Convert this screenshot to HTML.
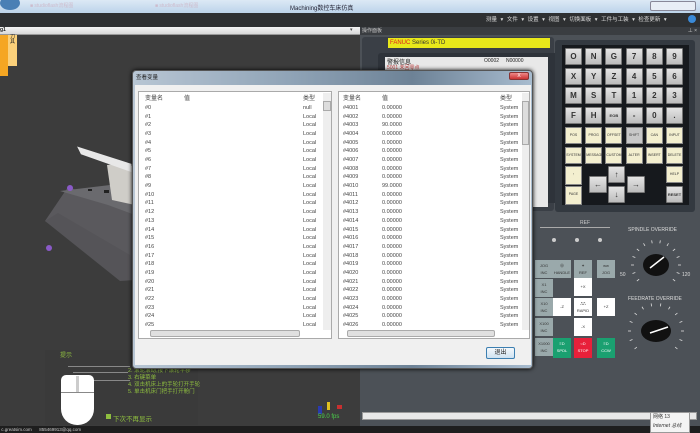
<!DOCTYPE html>
<html><head><meta charset="utf-8">
<style>
*{margin:0;padding:0;box-sizing:border-box}
body{width:700px;height:433px;overflow:hidden;position:relative;background:#3c3c3c;font-family:"Liberation Sans","Noto Sans CJK SC",sans-serif;font-size:6px;color:#222}
.a{position:absolute}
.row{position:absolute;left:0;right:0;height:8.68px;line-height:8.68px;font-size:5.5px;color:#444}
.row span{position:absolute}
.key{position:absolute;width:17px;height:17px;background:linear-gradient(#e4e4e4,#bcbcbc);border:1px solid #777;border-radius:1px;font-size:8px;font-weight:bold;color:#333;text-align:center;line-height:15px}
.fk{position:absolute;width:17px;height:17px;background:#f3efcf;border:1px solid #888;font-size:3.5px;color:#333;text-align:center;line-height:15px}
.mb{position:absolute;width:18px;height:18px;font-size:4px;text-align:center;color:#333;line-height:7px;padding-top:2px}
</style></head><body>
<div class="a" style="left:0;top:0;width:700px;height:13px;background:linear-gradient(#dce9f5,#bcd3ea)"></div>
<div class="a" style="left:0;top:-4px;width:20px;height:14px;border-radius:50%;background:#4a7fb5"></div>
<div class="a" style="left:30px;top:2px;width:100px;height:8px;color:#c9a;opacity:.5;font-size:5px">■ studioflash流程图</div>
<div class="a" style="left:155px;top:2px;width:100px;height:8px;color:#c9a;opacity:.5;font-size:5px">■ studioflash流程图</div>
<div class="a" style="left:290px;top:3px;font-size:6px;color:#223">Machining数控车床仿真</div>
<div class="a" style="left:650px;top:1px;width:46px;height:10px;border:1px solid #889;background:#e8eef6;border-radius:2px"></div>
<div class="a" style="left:0;top:13px;width:700px;height:14px;background:#2e3032"></div>
<div class="a" style="left:486px;top:15px;font-size:5.5px;color:#ddd;word-spacing:2px">测量 ▾ 文件 ▾ 设置 ▾ 视图 ▾ 切换面板 ▾ 工件与工装 ▾ 检查更新 ▾</div>
<div class="a" style="left:688px;top:15px;width:8px;height:8px;border-radius:50%;background:#3a8ad8"></div>
<div class="a" style="left:0;top:27px;width:360px;height:8px;background:linear-gradient(#f4f4f4,#d8d8d8);border-bottom:1px solid #999"></div>
<div class="a" style="left:0;top:27px;font-size:5px;font-weight:bold">g1</div>
<div class="a" style="left:350px;top:27px;font-size:5px;color:#444">▾</div>
<div class="a" style="left:0;top:35px;width:8px;height:41px;background:#f5a623"></div>
<div class="a" style="left:8px;top:35px;width:9px;height:31px;background:#fbd07a;font-size:5px;line-height:5px;text-align:center">刀具</div>
<svg class="a" style="left:0;top:35px" width="360" height="380">
<polygon points="45,186 68,152 108,166 135,178 135,245" fill="#5a595d"/>
<polygon points="60,156 108,170 135,180 135,160 110,150" fill="#6a6a6e"/>
<polygon points="45,186 58,178 130,220 135,245 120,246" fill="#555458"/>
<polygon points="107,130 125,128 135,132 135,170 112,165" fill="#cfcdc8"/>
<polygon points="80,114 82,118 130,135 130,130" fill="#e8e8e8" stroke="#e8e8e8" stroke-width="3"/>
<circle cx="70" cy="153" r="3" fill="#8a5ac8"/><circle cx="49" cy="213" r="3" fill="#8a5ac8"/>
<rect x="88" y="154" width="4" height="2" fill="#222"/><rect x="104" y="155" width="5" height="3" fill="#222"/>
</svg>
<div class="a" style="left:45px;top:350px;width:153px;height:75px;background:#3a3a3a"></div>
<div class="a" style="left:60px;top:350px;font-size:6px;color:#8fbf3f">提示</div>
<div class="a" style="left:128px;top:368px;font-size:5.5px;line-height:7px;color:#8fbf3f">2. 滚轮滚动,按下滚轮平移<br>3. 右键菜单<br>4. 双击机床上的手轮打开手轮<br>5. 单击机床门把手打开舱门</div>
<div class="a" style="left:68px;top:366px;width:62px;height:1px;background:#888"></div>
<div class="a" style="left:73px;top:372px;width:55px;height:1px;background:#888"></div>
<div class="a" style="left:85px;top:380px;width:45px;height:1px;background:#888"></div>
<div class="a" style="left:61px;top:375px;width:33px;height:50px;background:#fff;border-radius:5px 5px 16px 16px"></div>
<div class="a" style="left:61px;top:392px;width:33px;height:1px;background:#888"></div>
<div class="a" style="left:76px;top:376px;width:3px;height:16px;background:#ccc"></div>
<div class="a" style="left:106px;top:414px;width:5px;height:5px;background:#8fbf3f"></div>
<div class="a" style="left:113px;top:413px;font-size:6.5px;color:#8fbf3f">下次不再显示</div>
<div class="a" style="left:318px;top:406px;width:4px;height:8px;background:#2a3ab0"></div>
<div class="a" style="left:327px;top:402px;width:3px;height:8px;background:#e0c020"></div>
<div class="a" style="left:337px;top:405px;width:5px;height:4px;background:#c83030"></div>
<div class="a" style="left:318px;top:414px;font-size:6px;color:#4ad04a">59.0 fps</div>
<div class="a" style="left:0;top:426px;width:700px;height:7px;background:#1e1e1e;color:#ccc;font-size:4.5px;line-height:7px">&nbsp;c.greatsim.com &nbsp;&nbsp;&nbsp;&nbsp;&nbsp;855469913@qq.com</div>
<div class="a" style="left:360px;top:27px;width:340px;height:399px;background:#4c5157"></div>
<div class="a" style="left:360px;top:27px;width:340px;height:8px;background:#3a3d41;font-size:5px;line-height:8px;padding-left:2px;color:#ccc">操作面板<span style="position:absolute;right:3px">⊥ ×</span></div>
<div class="a" style="left:362px;top:37px;width:192px;height:174px;background:#3a3f46;border-radius:3px"></div>
<div class="a" style="left:388px;top:38px;width:162px;height:10px;background:#e8e81a;font-size:6px;line-height:10px;padding-left:2px;color:#333"><span style="color:#e02020">FANUC</span> Series 0i-TD</div>
<div class="a" style="left:378px;top:53px;width:180px;height:150px;background:#2e333a;border-radius:3px"></div>
<div class="a" style="left:385px;top:57px;width:163px;height:150px;background:#e8e8e8"></div>
<div class="a" style="left:387px;top:57px;font-size:6px;color:#222">警报信息</div>
<div class="a" style="left:484px;top:58px;font-size:5px;color:#222">O0002 &nbsp;&nbsp;&nbsp;&nbsp;N00000</div>
<div class="a" style="left:387px;top:64px;font-size:5px;color:#c04040">5001 未回零点</div>
<div class="a" style="left:555px;top:40px;width:140px;height:172px;background:#333940;border-radius:3px"></div>
<div class="a" style="left:562px;top:45px;width:127px;height:160px;background:#16191d"></div>
<div id="keys"></div>
<div class="a" style="left:580px;top:220px;font-size:5px;color:#ccc">REF</div>
<div class="a" style="left:540px;top:227px;width:70px;height:1px;background:#aaa"></div>
<div class="a" style="left:552px;top:238px;width:4px;height:4px;border-radius:50%;background:#ccc"></div>
<div class="a" style="left:575px;top:238px;width:4px;height:4px;border-radius:50%;background:#ccc"></div>
<div class="a" style="left:598px;top:238px;width:4px;height:4px;border-radius:50%;background:#ccc"></div>
<div class="mb" style="left:535px;top:260px;background:#9aa9ab">JOG<br>INC</div>
<div class="mb" style="left:553px;top:260px;background:#9aa9ab">⊕<br>HANDLE</div>
<div class="mb" style="left:574px;top:260px;background:#9aa9ab">✦<br>REF</div>
<div class="mb" style="left:597px;top:260px;background:#9aa9ab">ww<br>JOG</div>
<div class="mb" style="left:535px;top:279px;background:#9aa9ab">X1<br>INC</div>
<div class="mb" style="left:535px;top:298px;background:#9aa9ab">X10<br>INC</div>
<div class="mb" style="left:535px;top:318px;background:#9aa9ab">X100<br>INC</div>
<div class="mb" style="left:535px;top:338px;background:#9aa9ab">X1000<br>INC</div>
<div class="mb" style="left:574px;top:278px;background:#fff;line-height:14px">+X</div>
<div class="mb" style="left:553px;top:298px;background:#fff;line-height:14px">-Z</div>
<div class="mb" style="left:574px;top:298px;background:#fff">⎍⎍<br>RAPID</div>
<div class="mb" style="left:597px;top:298px;background:#fff;line-height:14px">+Z</div>
<div class="mb" style="left:574px;top:318px;background:#fff;line-height:14px">-X</div>
<div class="mb" style="left:553px;top:338px;height:20px;background:#1aa070;color:#fff">≡D<br>SPDL</div>
<div class="mb" style="left:574px;top:338px;height:20px;background:#e8203a;color:#fff">○D<br>STOP</div>
<div class="mb" style="left:597px;top:338px;height:20px;background:#1aa070;color:#fff">≡D<br>CCW</div>
<div class="a" style="left:628px;top:227px;font-size:5px;color:#ddd">SPINDLE OVERRIDE</div>
<svg class="a" style="left:620px;top:232px" width="75" height="140" id="kn">
<ellipse cx="36" cy="33" rx="13" ry="11" fill="#111"/>
<line x1="30" y1="36" x2="44" y2="25" stroke="#fff" stroke-width="1.5"/>
<ellipse cx="36" cy="99" rx="15" ry="11" fill="#111"/>
<line x1="30" y1="101" x2="48" y2="95" stroke="#fff" stroke-width="1.5"/>
<text x="0" y="44" font-size="5" fill="#ddd" font-family="Liberation Sans">50</text>
<text x="62" y="44" font-size="5" fill="#ddd" font-family="Liberation Sans">120</text>
<text x="8" y="68" font-size="5" fill="#ddd" font-family="Liberation Sans">FEEDRATE OVERRIDE</text>
</svg>
<div class="a" style="left:362px;top:412px;width:335px;height:8px;background:#e8e8e8;border:1px solid #999"></div>
<div class="a" style="left:650px;top:412px;width:40px;height:21px;background:#f4f4f4;border:1px solid #999;font-size:5px;line-height:9px;padding-left:2px;color:#333">网络 13<br><i>Internet 总线</i></div>
<div class="a" style="left:132px;top:70px;width:401px;height:299px;background:linear-gradient(90deg,#b8c6d4,#8fa3b6 40%,#6d8296 70%,#a8bccf);border:1px solid #555;border-radius:4px;box-shadow:0 0 4px #000"></div>
<div class="a" style="left:136px;top:73px;font-size:5.5px;color:#222">查看变量</div>
<div class="a" style="left:509px;top:72px;width:20px;height:8px;background:linear-gradient(#e88,#c33);border:1px solid #833;border-radius:2px;color:#fff;font-size:5px;text-align:center;line-height:7px">X</div>
<div class="a" style="left:135px;top:85px;width:396px;height:280px;background:#f0f0f0"></div>
<div class="a" style="left:138px;top:91px;width:194px;height:248px;background:#fff;border:1px solid #aaa"></div>
<div class="a" style="left:338px;top:91px;width:192px;height:248px;background:#fff;border:1px solid #aaa"></div>
<div class="a" style="left:323px;top:93px;width:8px;height:237px;background:#eee"></div>
<div class="a" style="left:323px;top:101px;width:8px;height:10px;background:#ddd;border:1px solid #aaa"></div>
<div class="a" style="left:522px;top:93px;width:7px;height:237px;background:#eee"></div>
<div class="a" style="left:522px;top:101px;width:7px;height:44px;background:#ddd;border:1px solid #aaa"></div>
<div class="a" style="left:150px;top:330px;width:150px;height:7px;background:#e0e0e0;border:1px solid #aaa;border-radius:2px"></div>
<div class="a" style="left:347px;top:330px;width:148px;height:7px;background:#e0e0e0;border:1px solid #aaa;border-radius:2px"></div>
<div class="a" style="left:486px;top:347px;width:29px;height:12px;background:linear-gradient(#f4f8fc,#cfe2f2);border:1px solid #3c7fb1;border-radius:2px;font-size:6px;text-align:center;line-height:10px">退出</div>
<div class="a" style="left:140px;top:92px;width:182px;height:237px">
<div class="row" style="top:3px;font-size:6px"><span style="left:5px">变量名</span><span style="left:44px">值</span><span style="left:163px">类型</span></div>
<div id="L"></div></div>
<div class="a" style="left:340px;top:92px;width:182px;height:237px">
<div class="row" style="top:3px;font-size:6px"><span style="left:3px">变量名</span><span style="left:42px">值</span><span style="left:160px">类型</span></div>
<div id="R"></div></div>
<script>
var L='',R='';
for(var i=0;i<=25;i++){var t=12+i*8.68;
L+='<div class="row" style="top:'+t+'px"><span style="left:5px">#'+i+'</span><span style="left:163px">'+(i==0?'null':'Local')+'</span></div>';
var n=4001+i,v=n==4003?'90.0000':n==4010?'99.0000':'0.00000';
R+='<div class="row" style="top:'+t+'px"><span style="left:3px">#'+n+'</span><span style="left:42px">'+v+'</span><span style="left:160px">System</span></div>';}
document.getElementById('L').innerHTML=L;document.getElementById('R').innerHTML=R;
var k=[['O','N','G','7','8','9'],['X','Y','Z','4','5','6'],['M','S','T','1','2','3'],['F','H','EOB','-','0','.']];
var f=[['POS','PROG','OFFSET SETTING','SHIFT','CAN','INPUT'],['SYSTEM','MESSAGE','CUSTOM GRAPH','ALTER','INSERT','DELETE']];
var h='';
for(var r=0;r<4;r++)for(var c=0;c<6;c++)h+='<div class="key" style="left:'+(565+c*20.2)+'px;top:'+(48+r*19.6)+'px'+(k[r][c]=='EOB'?';font-size:4px':'')+'">'+k[r][c]+'</div>';
for(var r=0;r<2;r++)for(var c=0;c<6;c++)h+='<div class="fk" style="left:'+(565+c*20.2)+'px;top:'+(127+r*19.6)+'px;'+(f[r][c]=='SHIFT'?'background:#c8c8c8':'')+'">'+f[r][c]+'</div>';
h+='<div class="fk" style="left:565px;top:166px;height:19px">↑<br>PAGE</div>';
h+='<div class="fk" style="left:565px;top:186px;height:19px">PAGE<br>↓</div>';
h+='<div class="key" style="left:589px;top:176px;width:18px">←</div>';
h+='<div class="key" style="left:608px;top:166px">↑</div>';
h+='<div class="key" style="left:608px;top:186px">↓</div>';
h+='<div class="key" style="left:627px;top:176px;width:18px">→</div>';
h+='<div class="fk" style="left:666px;top:166px">HELP</div>';
h+='<div class="key" style="left:666px;top:186px;font-size:4px">RESET</div>';
document.getElementById('keys').innerHTML=h;
var s='';
function ticks(cx,cy,r){for(var a=-220;a<=40;a+=20){var t=a*Math.PI/180;s+='<line x1="'+(cx+r*Math.cos(t))+'" y1="'+(cy+r*Math.sin(t))+'" x2="'+(cx+(r+3)*Math.cos(t))+'" y2="'+(cy+(r+3)*Math.sin(t))+'" stroke="#ddd" stroke-width="0.8"/>';}}
ticks(36,33,22);ticks(36,99,25);
document.getElementById('kn').insertAdjacentHTML('afterbegin',s);
</script>
</body></html>
